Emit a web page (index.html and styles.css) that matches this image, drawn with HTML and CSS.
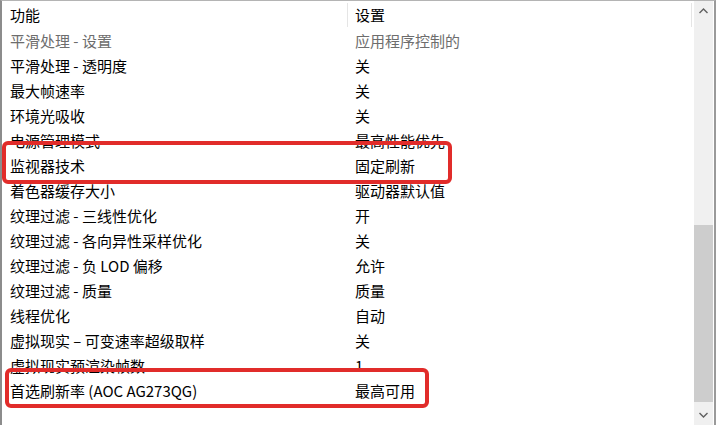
FILE: index.html
```html
<!DOCTYPE html>
<html lang="zh-CN">
<head>
    <meta charset="UTF-8">
    <title>3D 设置</title>
    <link rel="stylesheet" href="styles.css">
</head>
<body>
    <div class="listview">
        <div class="list">
            <div class="header">
                <div class="col col-name">功能</div>
                <div class="col col-value">设置</div>
                <div class="col col-rest"></div>
            </div>
            <div class="row disabled"><div class="col col-name">平滑处理 - 设置</div><div class="col col-value">应用程序控制的</div></div>
            <div class="row"><div class="col col-name">平滑处理 - 透明度</div><div class="col col-value">关</div></div>
            <div class="row"><div class="col col-name">最大帧速率</div><div class="col col-value">关</div></div>
            <div class="row"><div class="col col-name">环境光吸收</div><div class="col col-value">关</div></div>
            <div class="row"><div class="col col-name">电源管理模式</div><div class="col col-value">最高性能优先</div></div>
            <div class="row"><div class="col col-name">监视器技术</div><div class="col col-value">固定刷新</div></div>
            <div class="row"><div class="col col-name">着色器缓存大小</div><div class="col col-value">驱动器默认值</div></div>
            <div class="row"><div class="col col-name">纹理过滤 - 三线性优化</div><div class="col col-value">开</div></div>
            <div class="row"><div class="col col-name">纹理过滤 - 各向异性采样优化</div><div class="col col-value">关</div></div>
            <div class="row"><div class="col col-name">纹理过滤 - 负 LOD 偏移</div><div class="col col-value">允许</div></div>
            <div class="row"><div class="col col-name">纹理过滤 - 质量</div><div class="col col-value">质量</div></div>
            <div class="row"><div class="col col-name">线程优化</div><div class="col col-value">自动</div></div>
            <div class="row"><div class="col col-name">虚拟现实 – 可变速率超级取样</div><div class="col col-value">关</div></div>
            <div class="row"><div class="col col-name">虚拟现实预渲染帧数</div><div class="col col-value">1</div></div>
            <div class="row"><div class="col col-name">首选刷新率 (AOC AG273QG)</div><div class="col col-value">最高可用</div></div>
        </div>
        <div class="scrollbar">
            <div class="arrow">
                <svg width="9" height="6" viewBox="0 0 9 6"><path d="M0.5 5 L4.5 1 L8.5 5" fill="none" stroke="#606060" stroke-width="1.4"/></svg>
            </div>
            <div class="track">
                <div class="thumb"></div>
            </div>
            <div class="arrow">
                <svg width="9" height="6" viewBox="0 0 9 6"><path d="M0.5 1 L4.5 5 L8.5 1" fill="none" stroke="#606060" stroke-width="1.4"/></svg>
            </div>
        </div>

        <!-- red highlight marks -->
        <div class="mark mark-monitor"></div>
        <div class="mark mark-refresh"></div>
    </div>
</body>
</html>
```

FILE: styles.css
```css
body {
    margin: 0;
    background: #fff;
    font-family: "Noto Sans CJK SC", "Noto Sans", sans-serif;
    font-size: 15px;
    color: #000;
}

.listview {
    position: relative;
    width: 716px;
    height: 425px;
    box-sizing: border-box;
    border-top: 1px solid #b4b4b4;
    border-left: 2px solid #8c8c8c;
    border-right: 2px solid #9a9a9a;
    display: flex;
    overflow: hidden;
}

.list {
    flex: 1;
    overflow: hidden;
}

.header {
    display: flex;
    height: 27px;
}

.header .col {
    border-right: 1px solid #e5e5e5;
    margin: 2px 0 1px;
    line-height: 24px;
}

.row {
    display: flex;
    height: 25px;
    line-height: 25px;
}

.col {
    box-sizing: border-box;
    white-space: nowrap;
}

.col-name {
    width: 346px;
    padding-left: 8px;
}

.col-value {
    width: 344px;
    padding-left: 7px;
}

.header .col-rest {
    flex: 1;
    border-right: none;
}

.row.disabled {
    color: #6d6d6d;
}

.scrollbar {
    width: 19px;
    margin-right: 1px;
    background: #f0f0f0;
    display: flex;
    flex-direction: column;
}

.arrow {
    height: 20px;
    display: flex;
    align-items: center;
    justify-content: center;
}

.track {
    flex: 1;
}

.thumb {
    margin-top: 204px;
    height: 177px;
    background: #cdcdcd;
}

.mark {
    position: absolute;
    border: 4px solid #e12c2a;
    border-radius: 6px;
    box-sizing: border-box;
}

.mark-monitor {
    left: 0;
    top: 140px;
    width: 450px;
    height: 43px;
}

.mark-refresh {
    left: 3px;
    top: 367px;
    width: 424px;
    height: 40px;
}
```
